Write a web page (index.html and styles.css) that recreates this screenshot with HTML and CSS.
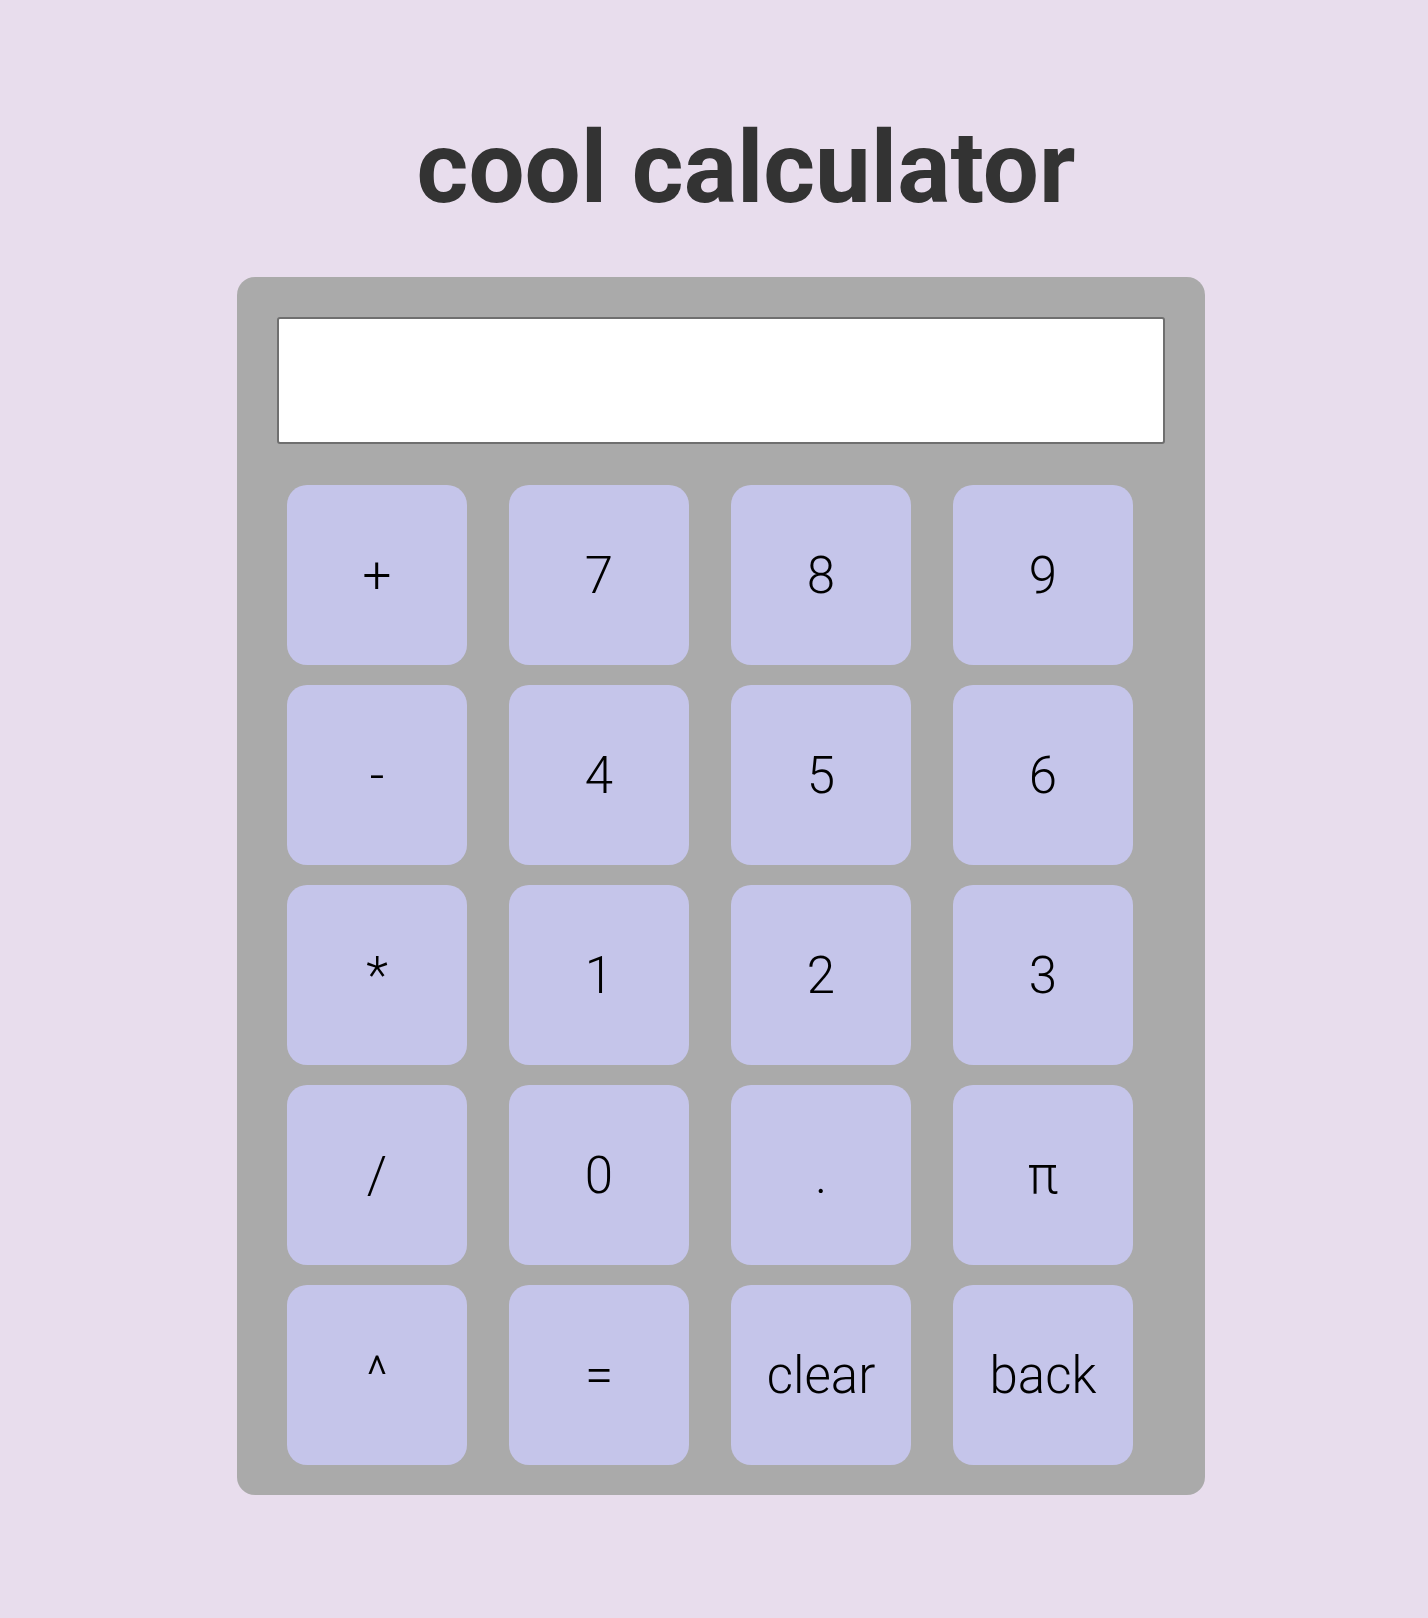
FILE: index.html
```html
<!DOCTYPE html>
<html lang="en">
<head>
<meta charset="utf-8">
<title>cool calculator</title>
<link rel="stylesheet" href="styles.css">
</head>
<body>
<h1 class="title">cool calculator</h1>
<div class="calculator">
  <input class="display" type="text" aria-label="display">
  <div class="keys">
    <button class="key">+</button>
    <button class="key">7</button>
    <button class="key">8</button>
    <button class="key">9</button>
    <button class="key">-</button>
    <button class="key">4</button>
    <button class="key">5</button>
    <button class="key">6</button>
    <button class="key">*</button>
    <button class="key">1</button>
    <button class="key">2</button>
    <button class="key">3</button>
    <button class="key">/</button>
    <button class="key">0</button>
    <button class="key">.</button>
    <button class="key">π</button>
    <button class="key">^</button>
    <button class="key">=</button>
    <button class="key">clear</button>
    <button class="key">back</button>
  </div>
</div>
</body>
</html>
```
FILE: styles.css
```css
html, body {
  margin: 0;
  padding: 0;
}
body {
  background: #e8dded;
  font-family: Roboto, "Noto Sans", sans-serif;
  min-height: 1618px;
  padding-top: 1px;
  box-sizing: border-box;
}
.title {
  margin: 108px 0 0 64px;
  text-align: center;
  font-family: Roboto, sans-serif;
  font-weight: 700;
  font-size: 99.5px;
  line-height: 118px;
  color: #333333;
}
.calculator {
  width: 968px;
  box-sizing: border-box;
  margin: 50px 0 0 237px;
  padding: 40px 40px 20px;
  background: #aaaaaa;
  border-radius: 18px;
}
.display {
  display: block;
  width: 100%;
  height: 127px;
  box-sizing: border-box;
  margin: 0 0 31px;
  border: 2px solid #6f6f6f;
  border-radius: 3px;
  background: #ffffff;
  font-family: Roboto, sans-serif;
  font-size: 40px;
}
.keys {
  display: grid;
  grid-template-columns: repeat(4, 1fr);
}
.key {
  width: 180px;
  height: 180px;
  margin: 10px;
  padding: 0;
  border: none;
  border-radius: 20px;
  background: #c5c5ea;
  color: #000000;
  font-family: Roboto, sans-serif;
  font-weight: 300;
  font-size: 51px;
}
```
